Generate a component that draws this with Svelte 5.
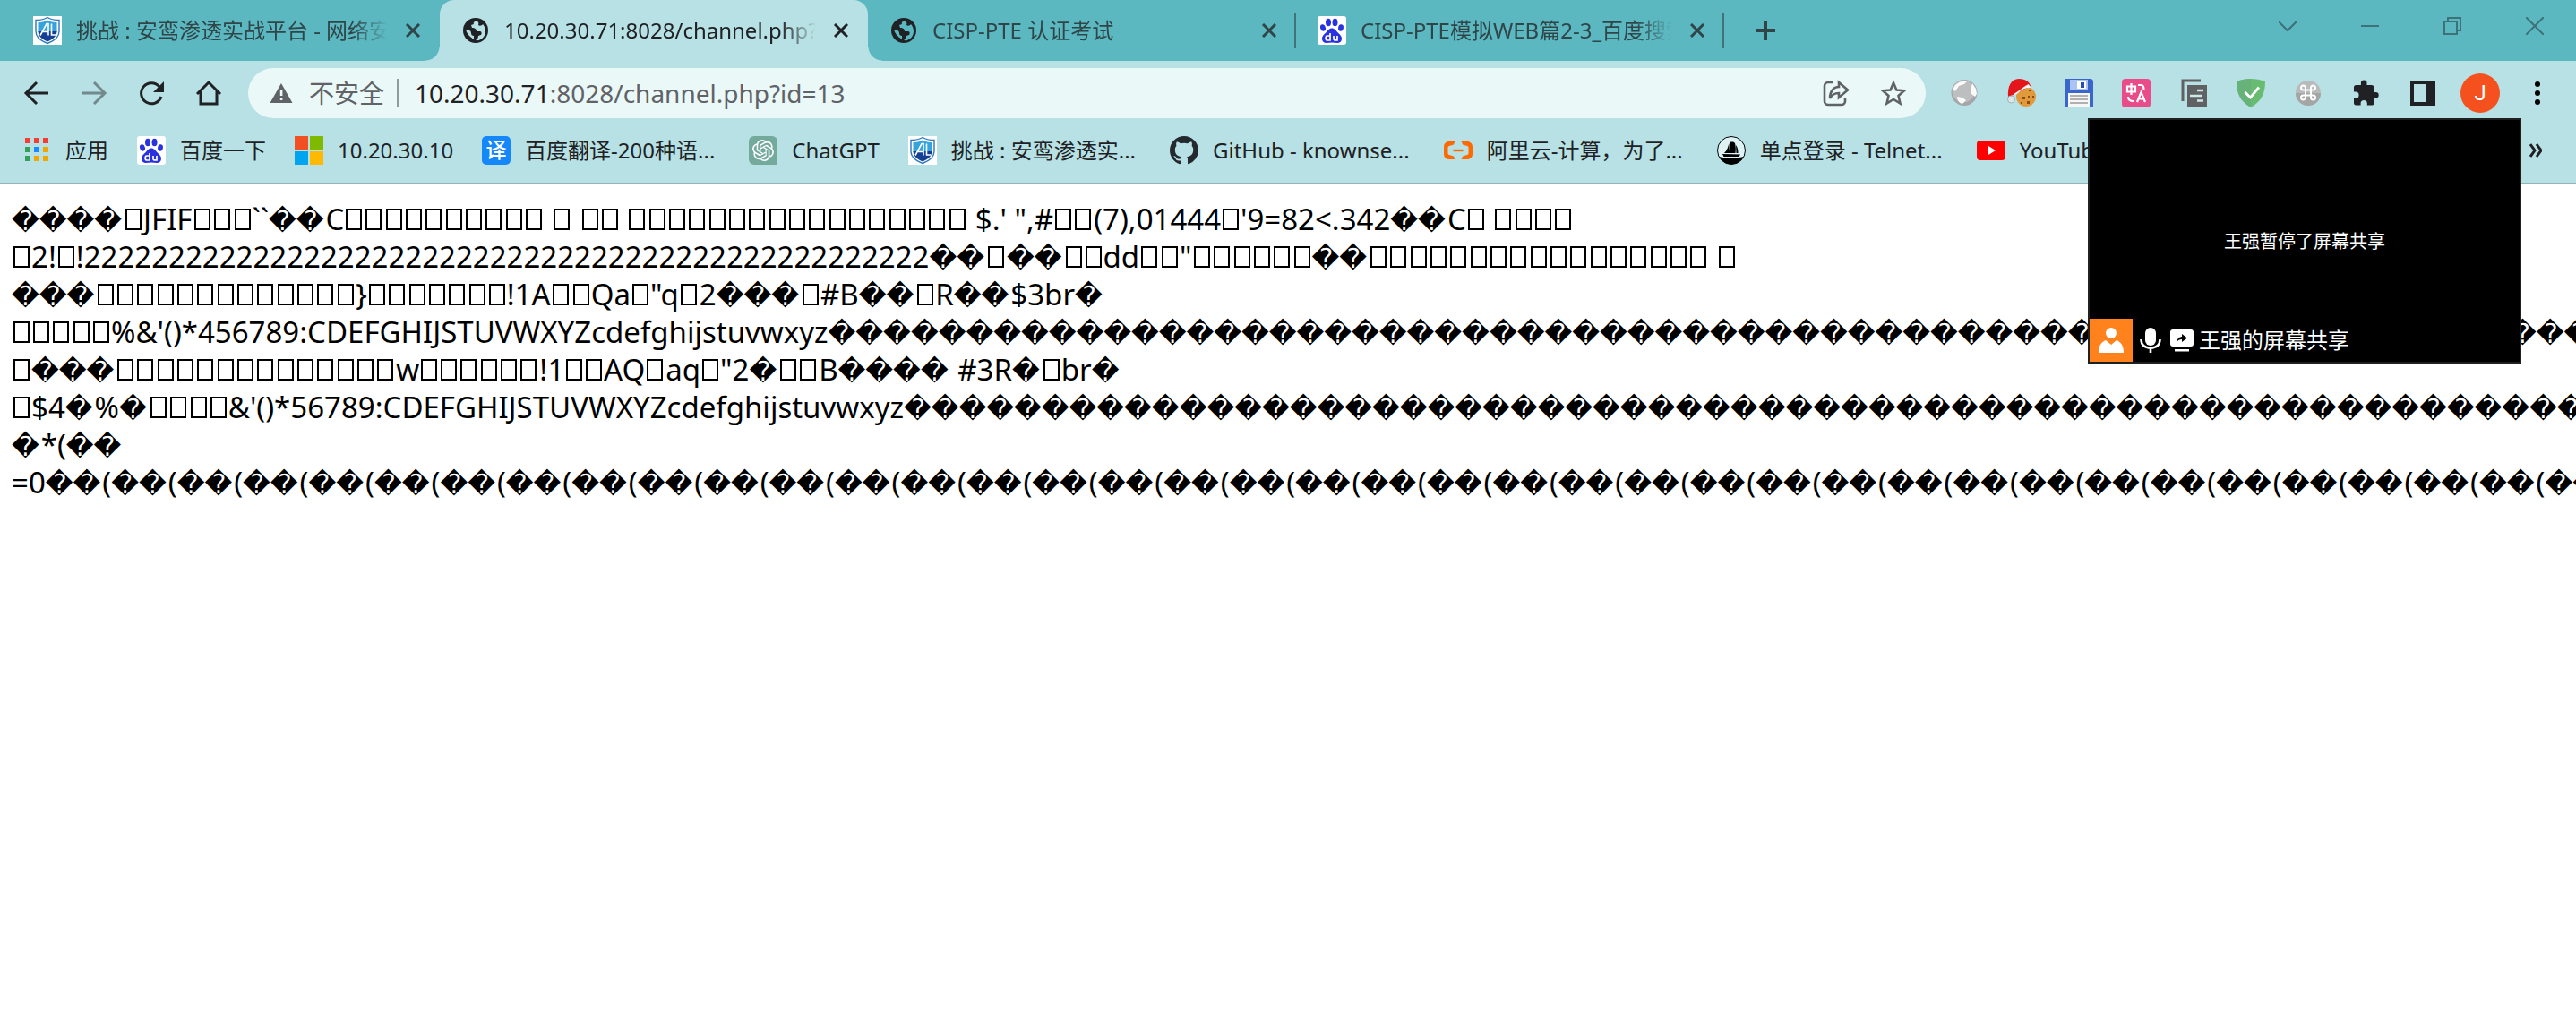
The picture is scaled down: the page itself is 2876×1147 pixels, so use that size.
<script>
  const bad = (n) => '\uFFFD'.repeat(n);
  const box = (n) => '▯'.repeat(n);

  const lines = [
    `${bad(4)}${box(1)}JFIF${box(3)}\`\`${bad(2)}C${box(10)} ${box(1)} ${box(2)} ${box(17)} $.' ",#${box(2)}(7),01444${box(1)}'9=82<.342${bad(2)}C${box(1)} ${box(4)}`,
    `${box(1)}2!${box(1)}!${'2'.repeat(50)}${bad(2)}${box(1)}${bad(2)}${box(2)}dd${box(2)}"${box(6)}${bad(2)}${box(17)} ${box(1)}`,
    `${bad(3)}${box(13)}}${box(7)}!1A${box(2)}Qa${box(1)}"q${box(1)}2${bad(3)}${box(1)}#B${bad(2)}${box(1)}R${bad(2)}$3br${bad(1)}`,
    `${box(5)}%&'()*456789:CDEFGHIJSTUVWXYZcdefghijstuvwxyz${bad(76)}`,
    `${box(1)}${bad(3)}${box(14)}w${box(6)}!1${box(2)}AQ${box(1)}aq${box(1)}"2${bad(1)}${box(2)}B${bad(4)} #3R${bad(1)}${box(1)}br${bad(1)}`,
    `${box(1)}$4${bad(1)}%${bad(1)}${box(4)}&'()*56789:CDEFGHIJSTUVWXYZcdefghijstuvwxyz${bad(76)}`,
    `${bad(1)}*(${bad(2)}`,
    `=0${(bad(2) + '(').repeat(48)}`,
  ];

  // Split a line into runs of replacement marks, missing-glyph boxes and plain text.
  const runs = (line) => line.match(/\uFFFD+|▯|[^\uFFFD▯]+/g);
  const kind = (run) => (run[0] === '\uFFFD' ? 'bad' : 'plain');

  const tabs = [
    { icon: 'shield', title: '挑战 : 安鸾渗透实战平台 - 网络安全', active: false },
    { icon: 'globe', title: '10.20.30.71:8028/channel.php?id=13', active: true },
    { icon: 'globe', title: 'CISP-PTE 认证考试', active: false },
    { icon: 'baidu', title: 'CISP-PTE模拟WEB篇2-3_百度搜索', active: false },
  ];

  const bookmarks = [
    { icon: 'apps', title: '应用' },
    { icon: 'baidu', title: '百度一下' },
    { icon: 'ms', title: '10.20.30.10' },
    { icon: 'fanyi', title: '百度翻译-200种语...' },
    { icon: 'gpt', title: 'ChatGPT' },
    { icon: 'shield', title: '挑战 : 安鸾渗透实...' },
    { icon: 'github', title: 'GitHub - knownse...' },
    { icon: 'aliyun', title: '阿里云-计算，为了...' },
    { icon: 'sail', title: '单点登录 - Telnet...' },
    { icon: 'youtube', title: 'YouTube' },
  ];

  const extensions = ['sphere', 'cookie', 'floppy', 'translate', 'copy', 'guard', 'command', 'puzzle', 'panel'];
</script>

{#snippet icon(name)}
  <svg class="icon" viewBox="0 0 32 32" aria-hidden="true">
    {#if name === 'shield'}
      <rect width="32" height="32" fill="#fff" />
      <path d="M16 1.500C12 4 7 4.500 3 4.500V17c0 7 6 11 13 13.500C23 28 29 24 29 17V4.500c-4 0-9-.5-13-3z" fill="#fff" stroke="#2a78bd" stroke-width="1.400" />
      <path d="M16 4.500C13 6.500 9 7 5.500 7v11h21V7C23 7 19 6.500 16 4.500z" fill="#35a3dc" />
      <path d="M5.500 17c0 6 5 9 10.500 11.500C21.500 26 26.500 23 26.500 17z" fill="#163f94" />
      <path d="M8 21.500L15 8.500h2v13M11 17.500h6M20.500 8.500v12.500h5" fill="none" stroke="#fff" stroke-width="1.600" />
    {:else if name === 'globe'}
      <circle cx="16" cy="16" r="14" fill="#202124" />
      <path class="land" d="M17 5c-2 1-4 2-3 4l-3 1 1 3c3 0 5 1 5 4h4c2 0 2 3 1 4l-3 1c0 2-1 4-3 5 6 1 11-4 11-10 0-3-1-6-3-8-1 2-4 2-5 1 1-2 0-4-2-5zM5 15c1 4 4 8 9 11v-4c-2 0-3-1-3-3 0-3-3-4-6-4z" />
    {:else if name === 'baidu'}
      <rect width="32" height="32" rx="3" fill="#fff" />
      <g fill="#2932e1">
        <ellipse cx="12" cy="7" rx="3" ry="4.300" />
        <ellipse cx="19.500" cy="7" rx="3" ry="4.300" />
        <ellipse cx="6" cy="13" rx="2.900" ry="3.800" transform="rotate(-15 6 13)" />
        <ellipse cx="26" cy="13" rx="2.900" ry="3.800" transform="rotate(10 26 13)" />
        <path d="M16 13.500c3 0 4.500 2.500 6.500 4.800 2 2.200 4.500 3.700 4.500 7 0 3-2 4.700-5 4.700-2 0-4-.6-6-.6s-4 .6-6 .6c-3 0-5-1.700-5-4.700 0-3.300 2.500-4.800 4.500-7 2-2.300 3.500-4.800 6.500-4.800z" />
      </g>
      <path d="M14 19v8h-3c-2.500 0-2.500-5 0-5h3M18 22v3.500c0 1.500 1 1.500 4 1.500v-5" fill="none" stroke="#fff" stroke-width="1.700" />
    {:else if name === 'apps'}
      <path d="M3 2h6v6H3zM13 2h6v6h-6zM23 2h6v6h-6z" fill="#fb3b30" />
      <path d="M3 12h6v6H3zM3 22h6v6H3z" fill="#34a05a" />
      <path d="M13 12h6v6h-6z" fill="#1a8cff" />
      <path d="M23 12h6v6h-6zM13 22h6v6h-6zM23 22h6v6h-6z" fill="#f2a600" />
    {:else if name === 'ms'}
      <path d="M0 0h15v15H0z" fill="#f25022" />
      <path d="M17 0h15v15H17z" fill="#7fba00" />
      <path d="M0 17h15v15H0z" fill="#00a4ef" />
      <path d="M17 17h15v15H17z" fill="#ffb900" />
    {:else if name === 'fanyi'}
      <rect width="32" height="32" rx="5" fill="#1487fa" />
      <text x="16" y="24" text-anchor="middle" font-size="23" font-weight="500" fill="#fff">译</text>
    {:else if name === 'gpt'}
      <path d="M6 0h20a6 6 0 0 1 6 6v26H6a6 6 0 0 1-6-6V6a6 6 0 0 1 6-6z" fill="#74aa9c" />
      <path transform="translate(4 4)" fill="#fff" d="M22.2819 9.8211a5.9847 5.9847 0 0 0-.5157-4.9108 6.0462 6.0462 0 0 0-6.5098-2.9A6.0651 6.0651 0 0 0 4.9807 4.1818a5.9847 5.9847 0 0 0-3.9977 2.9 6.0462 6.0462 0 0 0 .7427 7.0966 5.98 5.98 0 0 0 .511 4.9107 6.051 6.051 0 0 0 6.5146 2.9001A5.9847 5.9847 0 0 0 13.2599 24a6.0557 6.0557 0 0 0 5.7718-4.2058 5.9894 5.9894 0 0 0 3.9977-2.9001 6.0557 6.0557 0 0 0-.7475-7.0729zm-9.022 12.6081a4.4755 4.4755 0 0 1-2.8764-1.0408l.1419-.0804 4.7783-2.7582a.7948.7948 0 0 0 .3927-.6813v-6.7369l2.02 1.1686a.071.071 0 0 1 .038.052v5.5826a4.504 4.504 0 0 1-4.4945 4.4944zm-9.6607-4.1254a4.4708 4.4708 0 0 1-.5346-3.0137l.142.0852 4.783 2.7582a.7712.7712 0 0 0 .7806 0l5.8428-3.3685v2.3324a.0804.0804 0 0 1-.0332.0615L9.74 19.9502a4.4992 4.4992 0 0 1-6.1408-1.6464zM2.3408 7.8956a4.485 4.485 0 0 1 2.3655-1.9728V11.6a.7664.7664 0 0 0 .3879.6765l5.8144 3.3543-2.0201 1.1685a.0757.0757 0 0 1-.071 0l-4.8303-2.7865A4.504 4.504 0 0 1 2.3408 7.872zm16.5963 3.8558L13.1038 8.364 15.1192 7.2a.0757.0757 0 0 1 .071 0l4.8303 2.7913a4.4944 4.4944 0 0 1-.6765 8.1042v-5.6772a.79.79 0 0 0-.407-.667zm2.0107-3.0231l-.142-.0852-4.7735-2.7818a.7759.7759 0 0 0-.7854 0L9.409 9.2297V6.8974a.0662.0662 0 0 1 .0284-.0615l4.8303-2.7866a4.4992 4.4992 0 0 1 6.6802 4.66zM8.3065 12.863l-2.02-1.1638a.0804.0804 0 0 1-.038-.0567V6.0742a4.4992 4.4992 0 0 1 7.3757-3.4537l-.142.0805L8.704 5.459a.7948.7948 0 0 0-.3927.6813zm1.0976-2.3654l2.602-1.4998 2.6069 1.4998v2.9994l-2.5974 1.4997-2.6067-1.4997Z" />
    {:else if name === 'github'}
      <path transform="scale(2)" fill="#24292f" d="M8 0C3.580 0 0 3.580 0 8c0 3.540 2.290 6.530 5.470 7.590.4.070.55-.17.55-.38 0-.19-.01-.82-.01-1.490-2.010.37-2.530-.49-2.690-.94-.09-.23-.48-.94-.82-1.130-.28-.15-.68-.52-.01-.53.63-.01 1.080.58 1.230.82.72 1.210 1.870.87 2.330.66.07-.52.28-.87.51-1.070-1.780-.2-3.640-.89-3.640-3.950 0-.87.31-1.590.82-2.150-.08-.2-.36-1.020.08-2.120 0 0 .67-.21 2.200.82.64-.18 1.320-.27 2-.27s1.360.09 2 .27c1.530-1.040 2.200-.82 2.200-.82.44 1.100.16 1.920.08 2.120.51.56.82 1.270.82 2.150 0 3.070-1.870 3.750-3.650 3.950.29.25.54.73.54 1.480 0 1.070-.01 1.930-.01 2.200 0 .21.15.46.55.38A8.010 8.010 0 0 0 16 8c0-4.420-3.580-8-8-8z" />
    {:else if name === 'aliyun'}
      <path d="M12.500 6L11 9.500 6 11c-1 .3-1.500 1-1.500 2v6c0 1 .5 1.700 1.500 2l5 1.500 1.500 3.500H6c-3.500 0-6-2.500-6-6v-8c0-3.500 2.500-6 6-6zM19.500 6L21 9.500l5 1.500c1 .3 1.500 1 1.500 2v6c0 1-.5 1.700-1.500 2l-5 1.500-1.500 3.500H26c3.500 0 6-2.500 6-6v-8c0-3.500-2.500-6-6-6z" fill="#ff6a00" />
      <path d="M10.500 14.800h11v2.400h-11z" fill="#ff6a00" />
    {:else if name === 'sail'}
      <circle cx="16" cy="16" r="15.500" fill="#dff3f4" stroke="#000" />
      <path d="M2.500 23c4 1 8 1.500 13 1.500s10 0 14-1.500c-2.500 5.500-7.500 8.500-13.500 8.500S5 28.500 2.500 23zM13.500 8C12 12 12 15 8 19h6.500c-1-4-1-7-1-11zM14.500 7c3-1 5 0 5.500 1 1 4 1 7 .5 11h-5.500c-1-4-1-8-.5-12zM21 10c2 3 2.500 5 2.500 9h-2zM6 20l20 .5-1.500 2.500h-17z" fill="#000" />
    {:else if name === 'youtube'}
      <rect y="5" width="32" height="22" rx="4" fill="#f00" />
      <path d="M13 11l8 5-8 5z" fill="#fff" />
    {:else if name === 'sphere'}
      <circle cx="16" cy="15.500" r="14.500" fill="#a3a5a6" />
      <circle cx="15" cy="14" r="12.500" fill="#bcbebf" />
      <path d="M6 7c4-4 9-5 13-4l-3 3-6 2-4 6-3-2zM25 5l4 6 1 6-2 3-4-3-1-5zM8 20l6 1 4 3-4 4c-4-1-6-4-6-8z" fill="#fafafa" />
    {:else if name === 'cookie'}
      <circle cx="21" cy="20" r="11" fill="#e09a3c" />
      <path d="M17 20h3v3h-3zM23 19h2v3h-2zM22 25h3v3h-3zM15 26h2v2h-2zM24 12h2v2h-2zM28 19h2v2h-2z" fill="#8a4b14" />
      <path d="M1 20C0 9 4 0 13 0c8 0 12 4 13 8L9 17z" fill="#e3171b" />
      <path d="M7 17c5-2 10-8 17-11l2 4C18 9 14 15 9 18z" fill="#f4f4f4" />
      <circle cx="4.500" cy="23" r="4" fill="#dfe6e8" stroke="#9fb0b4" />
    {:else if name === 'floppy'}
      <path d="M0 0h30l2 2v30H0z" fill="#3a66cc" />
      <path d="M6 1h20v11H6z" fill="#a9c3f2" />
      <path d="M14 2h10v9H14z" fill="#fff" />
      <path d="M18 4h4v6h-4z" fill="#2450b4" />
      <path d="M4 16h24v15H4z" fill="#f7f7f7" />
      <path d="M6 19h20M6 23h20M6 27h20" stroke="#9b9b9b" stroke-width="1.600" />
    {:else if name === 'translate'}
      <rect width="32" height="32" rx="4" fill="#ea4c89" />
      <path d="M6 8.500h9v6H6zM10.500 5v13M18 7h3.500q3 0 3 5M7 20q0 5 6 5M17 26l4.500-11L26 26M18.500 22.500h6" fill="none" stroke="#fff" stroke-width="2.200" />
    {:else if name === 'copy'}
      <path d="M4 25V2h20" fill="none" stroke="#616161" stroke-width="3" />
      <path d="M9 7h22v25H9z" fill="#5f6163" />
      <path d="M20 13h7M12 19h14M20 24.500h7" stroke="#cfe6e8" stroke-width="2.400" />
    {:else if name === 'guard'}
      <path d="M16 0C11 0 5 1 0 3c0 13 4 22 16 29C28 25 32 16 32 3 27 1 21 0 16 0z" fill="#68bc71" />
      <path d="M16 0C11 0 5 1 0 3c0 13 4 22 16 29z" fill="#67b279" />
      <path d="M9.500 15l6 6L25 9.500" fill="none" stroke="#fff" stroke-width="2.800" />
    {:else if name === 'command'}
      <circle cx="16" cy="16" r="14" fill="#b9bbbb" />
      <path d="M2 16h28a14 14 0 0 1-28 0z" fill="#a4a6a6" />
      <path d="M13 12.500h6v6h-6zM13 12.500V10a2.500 2.500 0 1 0-2.500 2.500zM19 12.500V10a2.500 2.500 0 1 1 2.500 2.500zM13 18.500V21a2.500 2.500 0 1 1-2.500-2.500zM19 18.500V21a2.500 2.500 0 1 0 2.500-2.500z" fill="none" stroke="#fff" stroke-width="2" />
    {:else if name === 'puzzle'}
      <path d="M27.500 15H25.500V9.500A2.700 2.700 0 0 0 23 7h-5.500V4.800a3.300 3.300 0 0 0-6.600 0V7H5.600A2.600 2.600 0 0 0 3 9.600v5h2a3.600 3.600 0 0 1 0 7.200H3v5A2.600 2.600 0 0 0 5.600 29.500h5v-2a3.600 3.600 0 0 1 7.200 0v2h5a2.600 2.600 0 0 0 2.600-2.600V21.600h2a3.300 3.300 0 0 0 0-6.600z" fill="#202124" />
    {:else if name === 'panel'}
      <path d="M2 2h28v28H2zM6 6v20h14V6z" fill="#202124" fill-rule="evenodd" />
    {/if}
  </svg>
{/snippet}

<div class="browser">
  <header>
    <div class="tabstrip">
      <div class="tabs">
        {#each tabs as tab}
          <div class="tab" class:active={tab.active}>
            {@render icon(tab.icon)}
            <span class="title">{tab.title}</span>
            <button class="close" aria-label="关闭">
              <svg viewBox="0 0 16 16"><path d="M1 1l14 14M15 1L1 15" /></svg>
            </button>
          </div>
        {/each}
      </div>
      <button class="newtab" aria-label="新标签页">
        <svg viewBox="0 0 24 24"><path d="M12 1v22M1 12h22" /></svg>
      </button>
      <div class="window-controls">
        <button aria-label="搜索标签页"><svg viewBox="0 0 20 20"><path d="M0 5l10 10L20 5" /></svg></button>
        <button aria-label="最小化"><svg viewBox="0 0 20 20"><path d="M0 10h20" /></svg></button>
        <button aria-label="还原"><svg viewBox="0 0 20 20"><path d="M1 5h14v14H1zM5 5V1h14v14h-4" /></svg></button>
        <button aria-label="关闭窗口"><svg viewBox="0 0 20 20"><path d="M0 0l20 20M20 0L0 20" /></svg></button>
      </div>
    </div>

    <div class="toolbar">
      <div class="nav">
        <button aria-label="后退"><svg viewBox="0 0 32 32"><path d="M29 16H5M16 4L4 16l12 12" /></svg></button>
        <button aria-label="前进" class="dim"><svg viewBox="0 0 32 32"><path d="M3 16h24M16 4l12 12-12 12" /></svg></button>
        <button aria-label="重新加载"><svg viewBox="0 0 32 32"><path d="M27 20A11.500 11.500 0 1 1 25 9" /><path d="M30 3v12H18z" class="solid" /></svg></button>
        <button aria-label="主页"><svg viewBox="0 0 32 32"><path d="M3 17L16 4l13 13M7 14v14h18V14" /></svg></button>
      </div>
      <div class="omnibox">
        <svg class="warn" viewBox="0 0 26 24" aria-hidden="true">
          <path d="M13 1l12.500 22H.5z" fill="#5f6368" />
          <path d="M11.800 9h2.600v6h-2.600zM11.800 17h2.600v3h-2.600z" fill="#ebf8f8" />
        </svg>
        <span class="insecure">不安全</span>
        <div class="url"><b>10.20.30.71</b>:8028/channel.php?id=13</div>
        <button aria-label="分享">
          <svg viewBox="0 0 32 32"><path d="M13 4H7a4 4 0 0 0-4 4v17a4 4 0 0 0 4 4h15a4 4 0 0 0 4-4v-4M19 4l10 8.500L19 21v-5c-5 0-8 2-10 6 0-8 4-13 10-13z" /></svg>
        </button>
        <button aria-label="添加书签">
          <svg viewBox="0 0 32 32"><path d="M16 4.500l3.400 8 8.600.8-6.500 5.700 2 8.500-7.500-4.500-7.500 4.500 2-8.500L4 13.300l8.600-.8z" /></svg>
        </button>
      </div>
      <div class="extensions">
        {#each extensions as name}
          <button aria-label={name}>{@render icon(name)}</button>
        {/each}
        <button class="avatar" aria-label="个人资料">J</button>
        <button aria-label="菜单">
          <svg class="icon" viewBox="0 0 32 32"><circle cx="16" cy="6" r="3" /><circle cx="16" cy="16" r="3" /><circle cx="16" cy="26" r="3" /></svg>
        </button>
      </div>
    </div>

    <nav class="bookmarks">
      {#each bookmarks as b}
        <a href="#top" class:clipped={b.title.endsWith('...')}>{@render icon(b.icon)}<span>{b.title}</span></a>
      {/each}
      <button class="more" aria-label="更多书签">
        <svg viewBox="0 0 14 16"><path d="M1 1l5 7-5 7M8 1l5 7-5 7" /></svg>
      </button>
    </nav>
  </header>

  <main>
    {#each lines as line}
      <p>{#each runs(line) as run}{#if run === '▯'}<i class="tofu"></i>{:else}<span class={kind(run)}>{run}</span>{/if}{/each}</p>
    {/each}
  </main>

  <aside class="share">
    <p class="message">王强暂停了屏幕共享</p>
    <div class="presenter">
      <span class="person">
        <svg viewBox="0 0 28 28"><circle cx="14" cy="6" r="6" /><path d="M0 28c0-8 3-12 8-14l6 5 6-5c5 2 8 6 8 14z" /></svg>
      </span>
      <svg class="mic" viewBox="0 0 24 28"><rect x="6" y="0" width="12" height="20" rx="6" /><path d="M1.500 13c0 6 4 9.500 10.500 9.500S22.500 19 22.500 13M12 22v6" fill="none" stroke="#fff" stroke-width="2.600" /></svg>
      <svg class="screen" viewBox="0 0 26 26"><rect x="0" y="1" width="26" height="19" rx="3" /><path d="M5 23h16v2.500H5z" /><path d="M7 15c1-4 3-6 6-6V6l6 4.500-6 4.500v-3c-3 0-4 1-6 3z" fill="#000" /></svg>
      <span>王强的屏幕共享</span>
    </div>
  </aside>
</div>

<style>
  :global(body) {
    margin: 0;
    background: #fff;
    overflow-x: hidden;
  }

  .browser {
    position: relative;
    overflow: hidden;
    font-family: 'Noto Sans', 'Noto Sans CJK SC', sans-serif;
    font-size: 24px;
    line-height: 32px;
    color: #202124;
  }

  button {
    display: flex;
    align-items: center;
    justify-content: center;
    flex: none;
    padding: 0;
    border: 0;
    background: none;
    font: inherit;
    color: inherit;
  }

  svg {
    display: block;
    flex: none;
  }

  .icon {
    width: 32px;
    height: 32px;
  }

  header {
    background: #b7e1e4;
    border-bottom: 2px solid #94b5b8;
  }

  .tabstrip {
    display: flex;
    height: 68px;
    padding-left: 13px;
    background: #5bb8c1;
  }

  .tabs {
    display: flex;
  }

  .tab {
    position: relative;
    display: flex;
    align-items: center;
    box-sizing: border-box;
    width: 478px;
    padding: 0 16px 0 24px;
    color: #2f4548;
  }

  .tab .icon {
    margin-right: 16px;
  }

  .tab .land {
    fill: #5bb8c1;
  }

  .tab.active .land {
    fill: #b7e1e4;
  }

  .title {
    flex: 1;
    min-width: 0;
    overflow: hidden;
    white-space: nowrap;
    mask-image: linear-gradient(to left, transparent, #000 40px);
  }

  .close {
    width: 28px;
    height: 28px;
    margin-left: 14px;
  }

  .close svg {
    width: 16px;
    height: 16px;
    fill: none;
    stroke: currentColor;
    stroke-width: 3;
  }

  .tab.active {
    background: #b7e1e4;
    border-radius: 16px 16px 0 0;
    color: #202124;
  }

  .tab.active::before,
  .tab.active::after {
    content: '';
    position: absolute;
    bottom: 0;
    width: 16px;
    height: 16px;
  }

  .tab.active::before {
    right: 100%;
    background: radial-gradient(circle at 0 0, transparent 15px, #b7e1e4 16px);
  }

  .tab.active::after {
    left: 100%;
    background: radial-gradient(circle at 100% 0, transparent 15px, #b7e1e4 16px);
  }

  .tab:nth-child(n + 3) {
    background: linear-gradient(#407478, #407478) right center / 2px 40px no-repeat;
  }

  .newtab {
    width: 92px;
  }

  .newtab svg {
    width: 24px;
    height: 24px;
    stroke: #2f4548;
    stroke-width: 4;
  }

  .window-controls {
    display: flex;
    height: 58px;
    margin-left: auto;
  }

  .window-controls button {
    width: 92px;
  }

  .window-controls svg {
    width: 20px;
    height: 20px;
    fill: none;
    stroke: #3d7278;
    stroke-width: 2;
  }

  .toolbar {
    display: flex;
    align-items: center;
    height: 72px;
    padding: 0 11px 0 9px;
  }

  .nav {
    display: flex;
    margin-right: 12px;
  }

  .nav button {
    width: 64px;
    height: 56px;
  }

  .nav svg {
    width: 32px;
    height: 32px;
    fill: none;
    stroke: #202124;
    stroke-width: 3;
  }

  .nav .solid {
    fill: #202124;
    stroke: none;
  }

  .nav .dim {
    opacity: 0.45;
  }

  .omnibox {
    display: flex;
    flex: 1;
    align-items: center;
    height: 56px;
    margin-right: 11px;
    padding: 0 4px 0 24px;
    border-radius: 28px;
    background: #ebf8f8;
    font-size: 28px;
    color: #5f6368;
  }

  .warn {
    width: 26px;
    height: 24px;
    margin-right: 18px;
  }

  .insecure {
    padding-right: 14px;
    border-right: 2px solid #8f9b9d;
  }

  .url {
    flex: 1;
    padding-left: 18px;
    white-space: nowrap;
  }

  .url b {
    font-weight: 400;
    color: #202124;
  }

  .omnibox button {
    width: 64px;
  }

  .omnibox button svg {
    width: 32px;
    height: 32px;
    fill: none;
    stroke: #5f6368;
    stroke-width: 2.600;
  }

  .extensions {
    display: flex;
    align-items: center;
  }

  .extensions button {
    width: 64px;
    height: 44px;
  }

  .extensions .avatar {
    width: 44px;
    margin: 0 10px;
    border-radius: 50%;
    background: #f4511e;
    font-family: Roboto, sans-serif;
    color: #fff;
  }

  .bookmarks {
    display: flex;
    align-items: center;
    gap: 32px;
    height: 64px;
    padding: 0 38px 8px 25px;
    box-sizing: border-box;
    white-space: nowrap;
  }

  .bookmarks a {
    display: flex;
    align-items: center;
    gap: 16px;
    color: inherit;
    text-decoration: none;
  }

  .bookmarks .clipped {
    padding-right: 6px;
  }

  .more {
    margin-left: auto;
  }

  .more svg {
    width: 14px;
    height: 16px;
    fill: none;
    stroke: #202124;
    stroke-width: 3;
  }

  main {
    padding: 18px 13px;
    font-size: 33px;
    line-height: 42px;
    color: #000;
  }

  main p {
    height: 42px;
    margin: 0;
    white-space: pre;
  }

  .bad {
    padding-right: 2px;
    font-family: 'DejaVu Sans', sans-serif;
    font-size: 30px;
  }

  .tofu {
    display: inline-block;
    box-sizing: border-box;
    width: 18px;
    height: 24px;
    margin: 0 2px;
    border: 2px solid #000;
  }

  .tofu:nth-of-type(3n) {
    margin-right: 3px;
  }

  .share {
    position: absolute;
    top: 132px;
    right: 61px;
    display: flex;
    flex-direction: column;
    box-sizing: border-box;
    width: 484px;
    height: 274px;
    border: 2px solid #1f2020;
    background: #000;
    color: #fff;
  }

  .message {
    flex: 1;
    margin: 0;
    padding-top: 120px;
    font-size: 20px;
    text-align: center;
  }

  .presenter {
    display: flex;
    align-items: center;
  }

  .presenter svg {
    fill: #fff;
  }

  .person {
    display: flex;
    align-items: center;
    justify-content: center;
    width: 48px;
    height: 48px;
    background: #ff821c;
  }

  .person svg {
    width: 28px;
    height: 28px;
  }

  .mic {
    width: 24px;
    height: 28px;
    margin: 0 10px 0 8px;
  }

  .screen {
    width: 26px;
    height: 26px;
    margin-right: 6px;
  }
</style>
